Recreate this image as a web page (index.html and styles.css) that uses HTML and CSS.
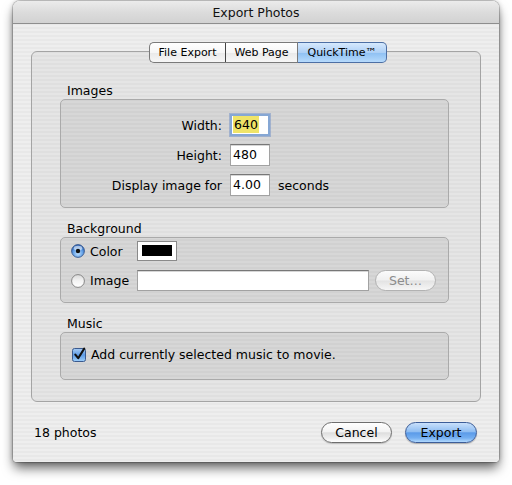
FILE: index.html
```html
<!DOCTYPE html>
<html>
<head>
<meta charset="utf-8">
<title>Export Photos</title>
<link rel="stylesheet" href="styles.css">
</head>
<body>
<div class="window">
  <div class="titlebar">Export Photos</div>
  <div class="content">
    <div class="tabpanel">
      <div class="tabs">
        <div class="tab tab-first">File Export</div>
        <div class="tab tab-mid">Web Page</div>
        <div class="tab tab-last tab-selected">QuickTime™</div>
      </div>

      <div class="group-label">Images</div>
      <div class="group group-images">
        <span class="lbl">Width:</span>
        <span class="field field-focus"><span class="sel">640</span></span>
        <span></span>
        <span class="lbl">Height:</span>
        <span class="field">480</span>
        <span></span>
        <span class="lbl">Display image for</span>
        <span class="field">4.00</span>
        <span class="unit">seconds</span>
      </div>

      <div class="group-label">Background</div>
      <div class="group group-bg">
        <span class="choice">
          <svg class="radio" width="14" height="14" viewBox="0 0 14 14">
            <defs>
              <radialGradient id="rb" cx="50%" cy="70%" r="65%">
                <stop offset="0" stop-color="#bfe0ff"/>
                <stop offset="0.6" stop-color="#5f9ee6"/>
                <stop offset="1" stop-color="#2d62b4"/>
              </radialGradient>
            </defs>
            <circle cx="7" cy="7" r="6.4" fill="url(#rb)" stroke="#36578c" stroke-width="0.9"/>
            <ellipse cx="7" cy="4.2" rx="4.2" ry="2.4" fill="#ffffff" opacity="0.55"/>
            <circle cx="7" cy="7" r="2.2" fill="#111"/>
          </svg>
          <span>Color</span>
        </span>
        <span class="swatch"><span class="swatch-fill"></span></span>
        <span></span>

        <span class="choice">
          <svg class="radio" width="14" height="14" viewBox="0 0 14 14">
            <defs>
              <linearGradient id="rw" x1="0" y1="0" x2="0" y2="1">
                <stop offset="0" stop-color="#d8d8d8"/>
                <stop offset="0.5" stop-color="#f4f4f4"/>
                <stop offset="1" stop-color="#ffffff"/>
              </linearGradient>
            </defs>
            <circle cx="7" cy="7" r="6.4" fill="url(#rw)" stroke="#7d7d7d" stroke-width="0.9"/>
          </svg>
          <span>Image</span>
        </span>
        <span class="field field-wide"></span>
        <span class="btn-set">Set…</span>
      </div>

      <div class="group-label">Music</div>
      <div class="group group-music">
        <span class="choice choice-check">
          <svg class="check" width="15" height="15" viewBox="0 0 15 15">
            <defs>
              <linearGradient id="cb" x1="0" y1="0" x2="0" y2="1">
                <stop offset="0" stop-color="#a9cdf5"/>
                <stop offset="0.5" stop-color="#5d9be5"/>
                <stop offset="1" stop-color="#9fd0fb"/>
              </linearGradient>
            </defs>
            <rect x="0.5" y="1.5" width="13" height="13" rx="2" fill="url(#cb)" stroke="#3b5a8e"/>
            <path d="M3.3 7.6 L6.2 11.2 L12.2 1.6" fill="none" stroke="#111" stroke-width="2.1" stroke-linecap="round" stroke-linejoin="round"/>
          </svg>
          <span>Add currently selected music to movie.</span>
        </span>
      </div>
    </div>

    <div class="footer">
      <span class="count">18 photos</span>
      <span class="btn btn-cancel">Cancel</span>
      <span class="btn btn-export">Export</span>
    </div>
  </div>
</div>
</body>
</html>
```

FILE: styles.css
```css
html, body {
  margin: 0;
  padding: 0;
  background: #ffffff;
}

body {
  font-family: "DejaVu Sans", "Noto Sans", sans-serif;
  font-size: 12.5px;
  color: #000;
  padding: 1px 0 20px 13px;
}

.window {
  width: 486px;
  height: 461px;
  box-sizing: border-box;
  border-radius: 7px 7px 4px 4px;
  overflow: hidden;
  display: flex;
  flex-direction: column;
  background: repeating-linear-gradient(to bottom, #eeeeee 0, #eeeeee 2px, #e8e8e8 2px, #e8e8e8 4px);
  box-shadow: 0 0 0 1px rgba(0, 0, 0, 0.16), 0 7px 12px -1px rgba(0, 0, 0, 0.6), 0 0 5px rgba(0, 0, 0, 0.25);
}

.titlebar {
  height: 22px;
  border-bottom: 1px solid #8e8e8e;
  background: linear-gradient(#ececec, #dcdcdc 50%, #d2d2d2);
  text-align: center;
  line-height: 23px;
  font-size: 12.5px;
  color: #111;
}

.content {
  flex: 1;
  display: flex;
  flex-direction: column;
  padding: 27px 18px 0;
}

.tabpanel {
  border: 1px solid #a4a4a4;
  border-radius: 6px;
  background: rgba(0, 0, 0, 0.035);
  padding: 0 0 21px;
}

.tabs {
  display: flex;
  margin-top: -10px;
  padding-left: 117px;
}

.tab {
  height: 21px;
  box-sizing: border-box;
  border: 1px solid #7a7a7a;
  border-left: none;
  background: linear-gradient(#ffffff, #f6f6f6 50%, #e9e9e9 52%, #f7f7f7);
  font-size: 11px;
  line-height: 19px;
  text-align: center;
  color: #000;
}

.tab-first {
  width: 77px;
  border-left: 1px solid #7a7a7a;
  border-radius: 5px 0 0 5px;
  border-right-color: #444;
}

.tab-mid {
  width: 72px;
}

.tab-last {
  width: 89px;
  border-radius: 0 5px 5px 0;
}

.tab-selected {
  border-color: #4d6fa4;
  background: linear-gradient(#d6e9fd, #aed0f6 50%, #8ec0f3 52%, #b6dafc);
}

.group-label {
  height: 14px;
  line-height: 14px;
  margin: 14px 0 1px 35px;
}

.tabs + .group-label {
  margin-top: 21px;
}

.group {
  margin: 0 31px 0 28px;
  border: 1px solid #aaaaaa;
  border-radius: 5px;
  background: rgba(0, 0, 0, 0.06);
  box-sizing: border-box;
}

.group-images {
  height: 109px;
  padding-top: 14px;
  display: grid;
  grid-template-columns: 161px 40px auto;
  grid-auto-rows: 22px;
  column-gap: 8px;
  row-gap: 8px;
  align-items: center;
  align-content: start;
}

.lbl {
  text-align: right;
}

.field {
  height: 22px;
  box-sizing: border-box;
  border: 1px solid #a2a2a2;
  border-top-color: #777;
  background: #fff;
  padding-left: 2px;
  line-height: 20px;
  box-shadow: inset 0 1px 0 #d6d6d6;
}

.field-focus {
  border: 2px solid #86a7d4;
  box-shadow: 0 0 0 1px rgba(120, 150, 200, 0.55);
  padding-left: 1px;
  line-height: 18px;
}

.sel {
  display: inline-block;
  background: #efe468;
  line-height: 17px;
  padding: 0 1px;
}

.group-bg {
  height: 66px;
  padding: 3px 0 0 10px;
  display: grid;
  grid-template-columns: 60px 232px 61px;
  grid-template-rows: 20px 21px;
  column-gap: 6px;
  row-gap: 9px;
  align-items: center;
}

.choice {
  display: flex;
  align-items: center;
  gap: 5px;
}

.radio {
  display: block;
  flex: none;
}

.swatch {
  width: 40px;
  height: 20px;
  box-sizing: border-box;
  border: 1px solid #8a8a8a;
  background: #fff;
  padding: 3px 4px 4px 4px;
}

.swatch-fill {
  display: block;
  width: 30px;
  height: 11px;
  background: #000;
}

.field-wide {
  height: 21px;
}

.btn-set {
  height: 21px;
  box-sizing: border-box;
  border: 1px solid #b2b2b2;
  border-radius: 11px;
  background: linear-gradient(#fbfbfb, #f0f0f0 48%, #e3e3e3 52%, #f6f6f6);
  color: #8c8c8c;
  text-align: center;
  line-height: 19px;
}

.group-music {
  height: 48px;
  padding: 12px 0 0 11px;
}

.choice-check {
  height: 18px;
  gap: 4px;
}

.check {
  display: block;
  flex: none;
}

.footer {
  display: flex;
  align-items: center;
  margin: 20px 4px 0 3px;
  height: 21px;
}

.count {
  flex: 1;
}

.btn {
  height: 21px;
  box-sizing: border-box;
  border-radius: 11px;
  text-align: center;
  line-height: 19px;
  font-size: 12.5px;
}

.btn-cancel {
  width: 71px;
  border: 1px solid #6e6e6e;
  background: linear-gradient(#ffffff, #f3f3f3 45%, #dedede 52%, #eeeeee 78%, #ffffff);
  box-shadow: 0 1px 1px rgba(0, 0, 0, 0.18);
}

.btn-export {
  width: 72px;
  margin-left: 13px;
  border: 1px solid #3c5d98;
  background: linear-gradient(#c9e0fb, #90bef2 45%, #5b9be9 52%, #73aef1 78%, #b0d8fd);
  box-shadow: 0 1px 1px rgba(0, 0, 0, 0.25);
}
```
